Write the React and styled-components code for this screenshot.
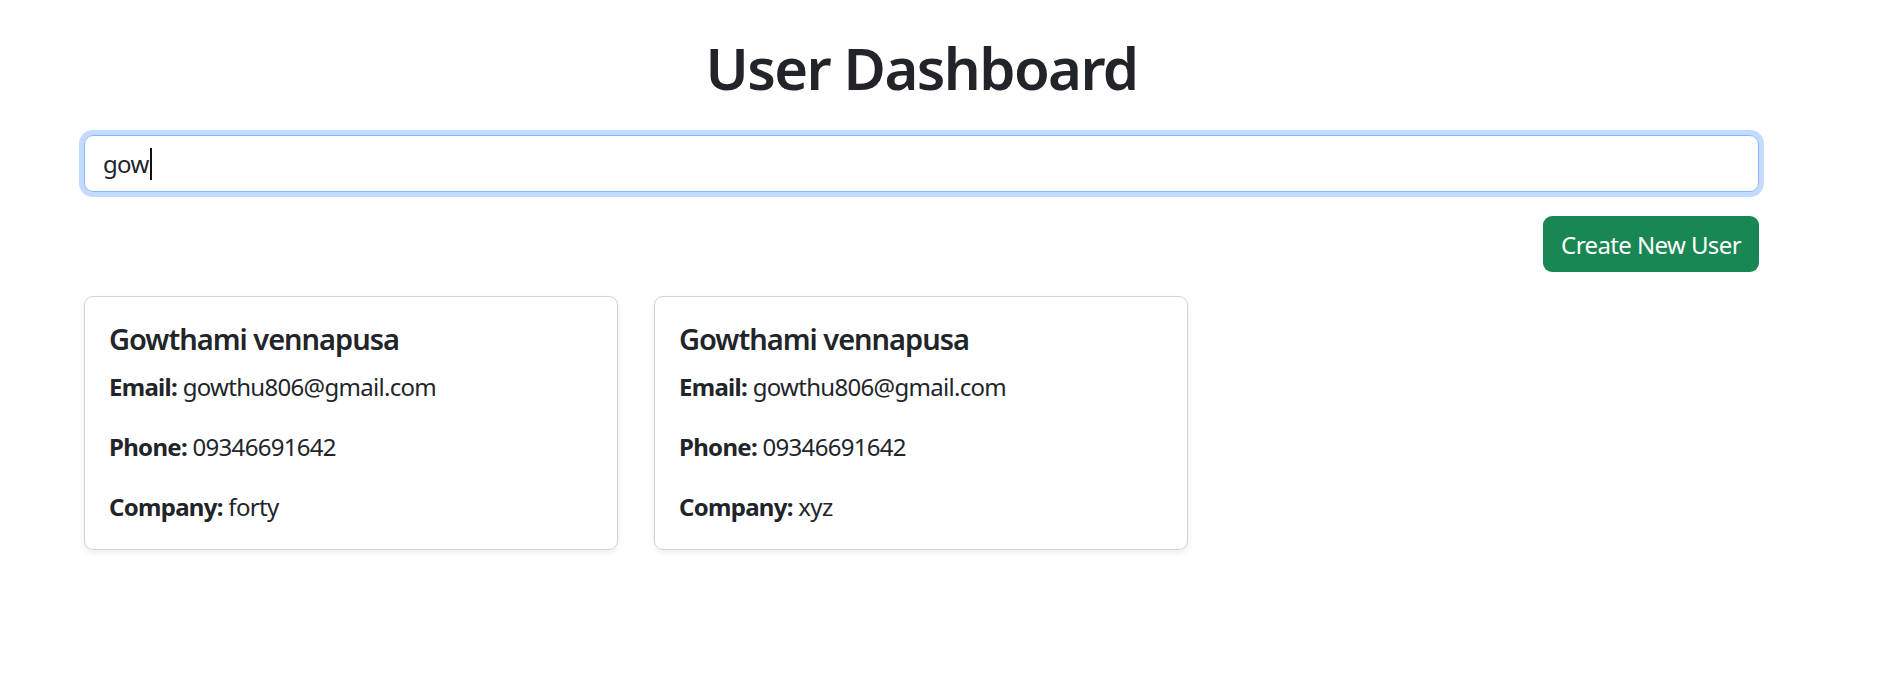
import React from "react";
import styled, { createGlobalStyle } from "styled-components";

const GlobalStyle = createGlobalStyle`
  html, body {
    margin: 0;
    padding: 0;
    background: #fff;
  }
  body {
    font-family: "Noto Sans", "Open Sans", sans-serif;
    font-size: 24px;
    line-height: 1.5;
    color: #212529;
    letter-spacing: -0.7px;
  }
  *, *::before, *::after {
    box-sizing: border-box;
  }
`;

const Page = styled.div`
  width: 1880px;
  min-height: 681px;
  padding: 0 121px 0 84px;
`;

const Title = styled.h1`
  margin: 32px 0 31px;
  font-size: 58px;
  font-weight: 600;
  line-height: 72px;
  letter-spacing: -1.6px;
  text-align: center;
`;

const SearchBox = styled.div`
  display: flex;
  align-items: center;
  height: 57px;
  padding: 0 18px;
  border: 1px solid #86b7fe;
  border-radius: 9px;
  box-shadow: 0 0 0 5px rgba(13, 110, 253, 0.25);
  font-size: 24px;
  color: #212529;
`;

const Caret = styled.span`
  display: inline-block;
  width: 2px;
  height: 32px;
  margin-left: 1px;
  background: #111;
`;

const Toolbar = styled.div`
  display: flex;
  justify-content: flex-end;
  margin: 24px 0;
`;

const Button = styled.button`
  height: 56px;
  padding: 0 18px;
  border: none;
  border-radius: 9px;
  background: #198754;
  color: #fff;
  font-family: inherit;
  font-size: 24px;
  letter-spacing: -0.6px;
  cursor: pointer;
`;

const CardGrid = styled.div`
  display: flex;
  gap: 36px;
`;

const Card = styled.div`
  width: 534px;
  padding: 24px;
  border: 1px solid rgba(0, 0, 0, 0.175);
  border-radius: 9px;
  box-shadow: 0 3px 6px rgba(0, 0, 0, 0.075);
`;

const CardTitle = styled.h5`
  margin: 0 0 12px;
  font-size: 29px;
  font-weight: 600;
  line-height: 36px;
  letter-spacing: -1px;
`;

const Field = styled.p`
  margin: 0 0 24px;

  &:last-child {
    margin-bottom: 0;
  }

  strong {
    font-weight: 700;
  }
`;

export default function App() {
  const users = [
    {
      name: "Gowthami vennapusa",
      email: "gowthu806@gmail.com",
      phone: "09346691642",
      company: "forty",
    },
    {
      name: "Gowthami vennapusa",
      email: "gowthu806@gmail.com",
      phone: "09346691642",
      company: "xyz",
    },
  ];

  return (
    <Page>
      <GlobalStyle />
      <Title>User Dashboard</Title>
      <SearchBox>
        gow
        <Caret />
      </SearchBox>
      <Toolbar>
        <Button>Create New User</Button>
      </Toolbar>
      <CardGrid>
        {users.map((user, i) => (
          <Card key={i}>
            <CardTitle>{user.name}</CardTitle>
            <Field>
              <strong>Email:</strong> {user.email}
            </Field>
            <Field>
              <strong>Phone:</strong> {user.phone}
            </Field>
            <Field>
              <strong>Company:</strong> {user.company}
            </Field>
          </Card>
        ))}
      </CardGrid>
    </Page>
  );
}
